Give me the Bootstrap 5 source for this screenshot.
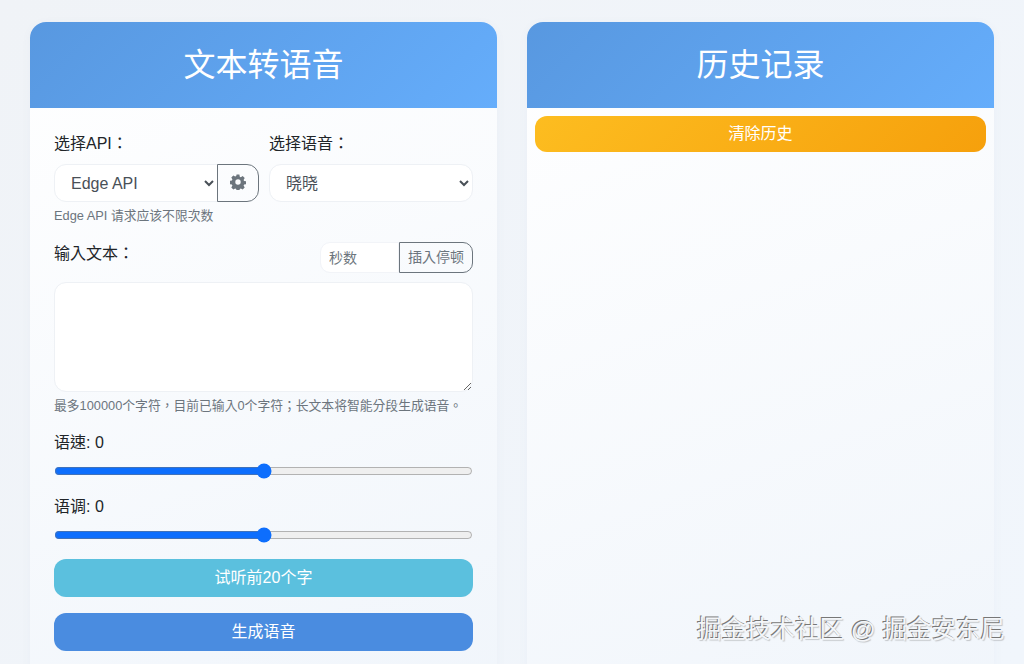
<!DOCTYPE html>
<html lang="zh-TW">
<head>
  <meta charset="UTF-8" />
  <title>文本转语音</title>
  <link href="https://cdn.jsdelivr.net/npm/bootstrap@5.3.0/dist/css/bootstrap.min.css" rel="stylesheet" />
  <style>
    html, body { height: 664px; overflow: hidden; }
    body {
      font-family: "Liberation Sans", "Noto Sans CJK TC", sans-serif;
      font-size: 16px;
      color: #212529;
      background: linear-gradient(135deg, #f0f3f7, #f1f6fc);
    }
    .page-wrap { position: relative; height: 664px; padding: 22px 30px 0; gap: 30px; }
    .panel {
      width: 467px;
      height: 700px;
      flex: none;
      border: 0;
      border-radius: 16px;
      overflow: hidden;
      background: linear-gradient(160deg, #ffffff, #f0f5fb);
      box-shadow: 0 2px 10px rgba(90, 120, 160, .05);
    }
    .panel-head {
      height: 86px;
      background: linear-gradient(135deg, #5898e0, #65adfb);
      color: #fff;
      font-size: 32px;
    }
    .panel-form { padding: 24px 24px 0; }
    .top-row { gap: 10px; }
    .api-col { width: 205px; flex: none; }
    .voice-col { flex: 1; min-width: 0; }
    .field-label { line-height: 24px; margin-bottom: 8px; }
    .soft-input {
      appearance: auto;
      height: 38px;
      border: 1px solid #eef1f5;
      border-radius: 12px;
      color: #495057;
      background-color: #fff;
      box-shadow: none;
    }
    .gear-btn {
      width: 42px;
      height: 38px;
      padding: 0 0 2px;
      margin-left: -1px;
      color: #6c757d;
      border: 1px solid #6c757d;
      border-radius: 0 12px 12px 0;
    }
    .api-select { border-radius: 12px 0 0 12px; flex: 1 1 0; min-width: 0; }
    .hint-text { font-size: 12.8px; line-height: 19px; color: #6c757d; margin-top: 4px; }
    .input-head { margin-top: 17px; margin-bottom: 9px; height: 31px; }
    .input-label { line-height: 24px; }
    .pause-group { width: 153px; height: 31px; }
    .pause-input {
      width: 79px;
      height: 31px;
      font-size: 14px;
      padding: 4px 8px;
      border: 1px solid #f2f4f8;
      border-radius: 10px 0 0 10px;
      color: #495057;
    }
    .pause-input::placeholder { color: #6c757d; }
    .pause-btn {
      flex: 1;
      height: 31px;
      padding: 0;
      font-size: 14px;
      color: #6c757d;
      border: 1px solid #6c757d;
      border-radius: 0 10px 10px 0;
      white-space: nowrap;
    }
    .text-box {
      height: 110px;
      border: 1px solid #eef1f5;
      border-radius: 12px;
      display: block;
    }
    .range-label { line-height: 24px; margin-bottom: 8px; }
    .rate-label { margin-top: 16px; }
    .pitch-label { margin-top: 16px; }
    .range-line { display: block; width: 100%; margin: 0; height: 16px; accent-color: #0d6efd; }
    .main-btn {
      display: block;
      width: 100%;
      height: 38px;
      padding: 0;
      border: 0;
      border-radius: 12px;
      color: #fff;
      font-size: 16px;
    }
    .btn-listen, .btn-listen:hover { background: #5bc0de; color: #fff; margin-top: 16px; }
    .btn-make, .btn-make:hover { background: #4a8ce0; color: #fff; margin-top: 16px; }
    .btn-clear, .btn-clear:hover {
      height: 36px;
      background: linear-gradient(135deg, #fdbd20, #f6a00c);
      color: #fff;
    }
    .watermark {
      position: absolute;
      right: 19px;
      top: 612px;
      font-size: 24.5px;
      line-height: 36px;
      color: #f4f6f9;
      text-shadow: -1px -1px 0 #777, 1px 1px 1px rgba(90, 90, 90, .3);
      white-space: nowrap;
    }
  </style>
</head>
<body>
<div class="page-wrap d-flex align-items-start">
  <!-- left panel -->
  <div class="card panel">
    <div class="panel-head d-flex align-items-center justify-content-center">文本转语音</div>
    <div class="panel-form">
      <div class="d-flex top-row">
        <div class="api-col">
          <div class="field-label">选择API：</div>
          <div class="d-flex">
            <select class="form-control soft-input api-select">
              <option>Edge API</option>
            </select>
            <button class="btn gear-btn d-flex align-items-center justify-content-center" type="button" aria-label="设置">
              <svg width="16" height="16" viewBox="0 0 16 16" fill="currentColor"><path fill-rule="evenodd" d="M6.6.6h2.8l.4 2.1 1 .5 1.9-1.1 2 2-1.1 1.9.5 1 2.1.4v2.8l-2.1.4-.5 1 1.1 1.9-2 2-1.9-1.1-1 .5-.4 2.1H6.6l-.4-2.1-1-.5-1.9 1.1-2-2 1.1-1.9-.5-1-2.1-.4V6.8l2.1-.4.5-1-1.1-1.9 2-2 1.9 1.1 1-.5zM8 5.3a2.7 2.7 0 1 0 0 5.4 2.7 2.7 0 0 0 0-5.4z"/></svg>
            </button>
          </div>
          <div class="hint-text">Edge API 请求应该不限次数</div>
        </div>
        <div class="voice-col">
          <div class="field-label">选择语音：</div>
          <select class="form-control soft-input">
            <option>晓晓</option>
          </select>
        </div>
      </div>
      <div class="d-flex justify-content-between align-items-start input-head">
        <div class="input-label">输入文本：</div>
        <div class="d-flex pause-group">
          <input class="form-control pause-input" type="text" placeholder="秒数" />
          <button class="btn pause-btn" type="button">插入停顿</button>
        </div>
      </div>
      <textarea class="form-control text-box"></textarea>
      <div class="hint-text">最多100000个字符，目前已输入0个字符；长文本将智能分段生成语音。</div>
      <div class="range-label rate-label">语速: 0</div>
      <input class="range-line" type="range" min="-100" max="100" value="0" />
      <div class="range-label pitch-label">语调: 0</div>
      <input class="range-line" type="range" min="-100" max="100" value="0" />
      <button class="btn main-btn btn-listen" type="button">试听前20个字</button>
      <button class="btn main-btn btn-make" type="button">生成语音</button>
    </div>
  </div>
  <!-- right panel -->
  <div class="card panel">
    <div class="panel-head d-flex align-items-center justify-content-center">历史记录</div>
    <div class="p-2">
      <button class="btn main-btn btn-clear" type="button">清除历史</button>
    </div>
  </div>
  <div class="watermark">掘金技术社区 @ 掘金安东尼</div>
</div>
<script src="https://cdn.jsdelivr.net/npm/bootstrap@5.3.0/dist/js/bootstrap.bundle.min.js"></script>
</body>
</html>
